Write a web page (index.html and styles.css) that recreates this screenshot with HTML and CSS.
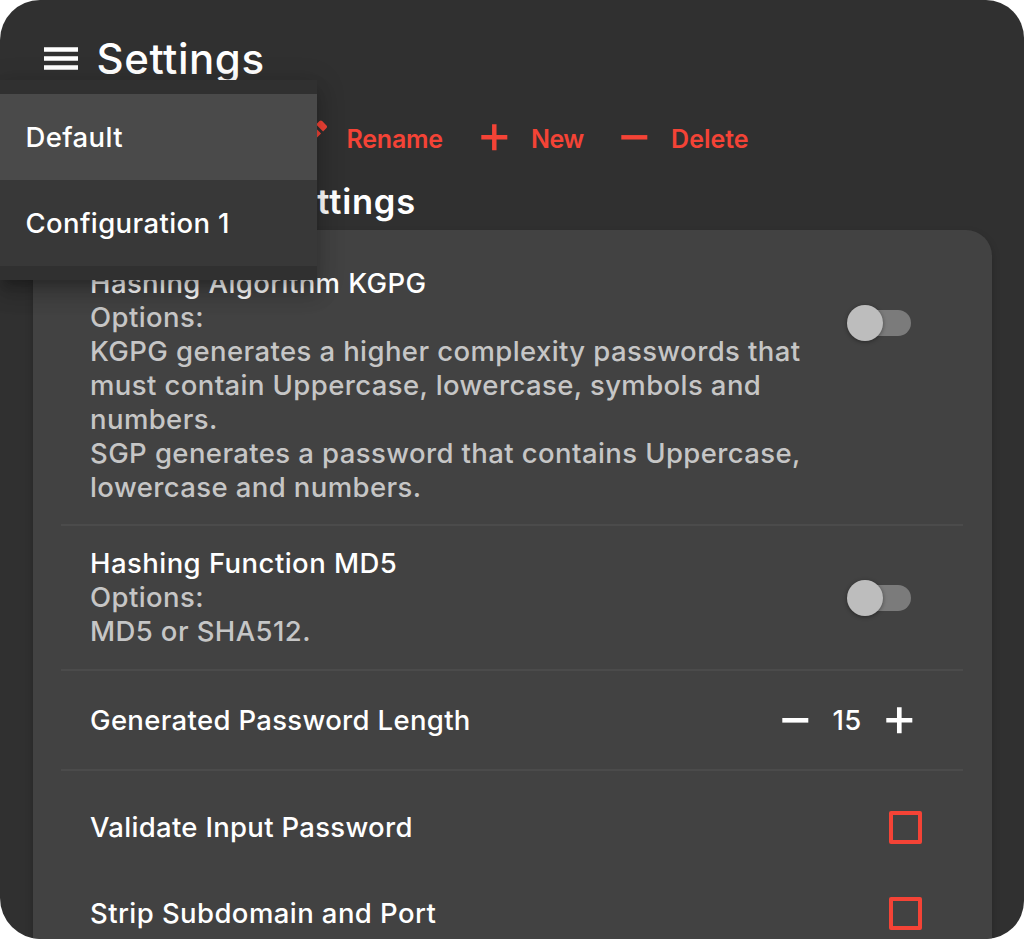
FILE: index.html
```html
<!DOCTYPE html>
<html lang="en">
<head>
<meta charset="utf-8">
<title>Settings</title>
<link rel="stylesheet" href="styles.css">
</head>
<body>
<div class="app">
  <header class="header">
    <svg class="menu-icon" viewBox="0 0 34 24"><path d="M0 .2h34v4.6H0zM0 9.2h34v4.6H0zM0 18.2h34v4.6H0z"/></svg>
    <h1 class="title">Settings</h1>
  </header>
  <nav class="toolbar">
    <button class="action rename"><svg class="icon" viewBox="0 0 24 24"><path d="M3 17.25V21h3.75L17.81 9.94l-3.75-3.75L3 17.25zM20.71 7.04c.39-.39.39-1.02 0-1.41l-2.34-2.34a.996.996 0 0 0-1.41 0l-1.83 1.83 3.75 3.75 1.83-1.83z"/></svg><span>Rename</span></button>
    <button class="action new"><svg class="icon" viewBox="0 0 24 24"><path d="M19 13.2h-5.8V19h-2.4v-5.8H5v-2.4h5.8V5h2.4v5.8H19z"/></svg><span>New</span></button>
    <button class="action delete"><svg class="icon" viewBox="0 0 24 24"><path d="M19 13.2H5v-2.4h14z"/></svg><span>Delete</span></button>
  </nav>
  <h2 class="section-title">Settings</h2>
  <main class="card">
    <section class="row algorithm">
      <div class="text">
        <div class="label">Hashing Algorithm KGPG</div>
        <div class="hint">Options:<br>KGPG generates a higher complexity passwords that<br>must contain Uppercase, lowercase, symbols and<br>numbers.<br>SGP generates a password that contains Uppercase,<br>lowercase and numbers.</div>
      </div>
      <div class="switch"><span class="thumb"></span></div>
    </section>
    <section class="row function">
      <div class="text">
        <div class="label">Hashing Function MD5</div>
        <div class="hint">Options:<br>MD5 or SHA512.</div>
      </div>
      <div class="switch"><span class="thumb"></span></div>
    </section>
    <section class="row length">
      <div class="label">Generated Password Length</div>
      <div class="stepper">
        <svg class="icon" viewBox="0 0 24 24"><path d="M19 13.25H5v-2.5h14z"/></svg>
        <span class="value">15</span>
        <svg class="icon" viewBox="0 0 24 24"><path d="M19 13.25h-5.75V19h-2.5v-5.75H5v-2.5h5.75V5h2.5v5.75H19z"/></svg>
      </div>
    </section>
    <section class="row check-row">
      <div class="label">Validate Input Password</div>
      <span class="checkbox"></span>
    </section>
    <section class="row check-row strip">
      <div class="label">Strip Subdomain and Port</div>
      <span class="checkbox"></span>
    </section>
  </main>
  <div class="menu">
    <div class="menu-item selected">Default</div>
    <div class="menu-item">Configuration 1</div>
  </div>
</div>
</body>
</html>
```
FILE: styles.css
```css
* { box-sizing: border-box; }
body {
  margin: 0;
  background: #fff;
  font-family: Inter, "Liberation Sans", sans-serif;
  overflow: hidden;
}
.app {
  position: relative;
  width: 1024px;
  height: 939px;
  overflow: hidden;
  background: #303030;
  border-radius: 40px 38px 38px 41px;
  color: #fff;
}
.header {
  display: flex;
  align-items: center;
  height: 80px;
  padding: 38px 0 0 44px;
  gap: 18.5px;
}
.menu-icon { width: 34px; height: 24px; fill: #fff; }
.title {
  margin: 0;
  font-size: 42px;
  line-height: 48px;
  font-weight: 500;
  letter-spacing: .55px;
}
.toolbar {
  display: flex;
  height: 114px;
  padding-left: 287.5px;
}
.action {
  display: flex;
  align-items: center;
  height: 114px;
  padding: 0;
  border: 0;
  background: none;
  color: #f44336;
  font: 600 25px/30px Inter, "Liberation Sans", sans-serif;
  letter-spacing: -.25px;
  gap: 14.5px;
}
.icon { width: 44.6px; height: 44.6px; fill: currentColor; flex: none; }
.rename { width: 184.5px; }
.new { width: 140px; letter-spacing: -.6px; }
.delete { letter-spacing: 0; }
.action span { padding-top: 4px; }
.section-title {
  margin: 0;
  width: 416px;
  height: 36px;
  margin-top: -10px;
  line-height: 36px;
  font-size: 34.5px;
  font-weight: 600;
  letter-spacing: .8px;
  text-align: right;
}
.card {
  width: 959px;
  height: 800px;
  margin: 10px 0 0 33px;
  padding: 14px 29px 0 28px;
  background: #424242;
  border-radius: 26px;
  box-shadow: 0 4px 8px rgba(0,0,0,.2);
}
.row {
  display: flex;
  justify-content: space-between;
  align-items: center;
  padding: 0 52px 0 29px;
  font-size: 27.5px;
  line-height: 34px;
  white-space: nowrap;
}
.label { font-weight: 500; letter-spacing: .4px; }
.hint { color: #c6c6c6; font-weight: 450; letter-spacing: .4px; }
.algorithm { height: 282px; align-items: flex-start; padding-top: 22px; border-bottom: 2px solid #4b4b4b; }
.algorithm .switch { margin-top: 44px; }
.function { height: 145px; border-bottom: 2px solid #4b4b4b; }
.function .text { margin-top: -1px; }
.function .label { letter-spacing: .45px; }
.length { height: 100px; padding-right: 41.5px; border-bottom: 2px solid #4b4b4b; }
.length .label { letter-spacing: .33px; }
.check-row { height: 86px; padding-right: 41px; }
.check-row .label { letter-spacing: .3px; }
.strip .label { letter-spacing: .42px; }
.length + .check-row { margin-top: 13px; }
.switch {
  display: flex;
  align-items: center;
  width: 61px;
  height: 26px;
  border-radius: 13px;
  background: #7b7b7b;
}
.thumb {
  width: 36px;
  height: 36px;
  flex: none;
  margin-left: -3.5px;
  border-radius: 50%;
  background: #bdbdbd;
  box-shadow: 0 1px 4px rgba(0,0,0,.4);
}
.stepper { display: flex; align-items: center; font-weight: 500; letter-spacing: .5px; }
.value { width: 59.5px; text-align: center; }
.checkbox { width: 33px; height: 33px; border: 4px solid #f44336; border-radius: 2px; }
.menu {
  position: absolute;
  left: 0;
  top: 80px;
  width: 317px;
  height: 200px;
  padding: 14px 0;
  background: #303030;
  box-shadow: 0 9px 9px -5px rgba(0,0,0,.2), 0 14px 19px 2px rgba(0,0,0,.14), 0 5px 25px 4px rgba(0,0,0,.12);
}
.menu-item {
  height: 86px;
  padding-left: 25.5px;
  line-height: 86px;
  font-size: 27.5px;
  font-weight: 500;
  letter-spacing: .38px;
  background: #383838;
}
.selected { background: #4a4a4a; }
```
